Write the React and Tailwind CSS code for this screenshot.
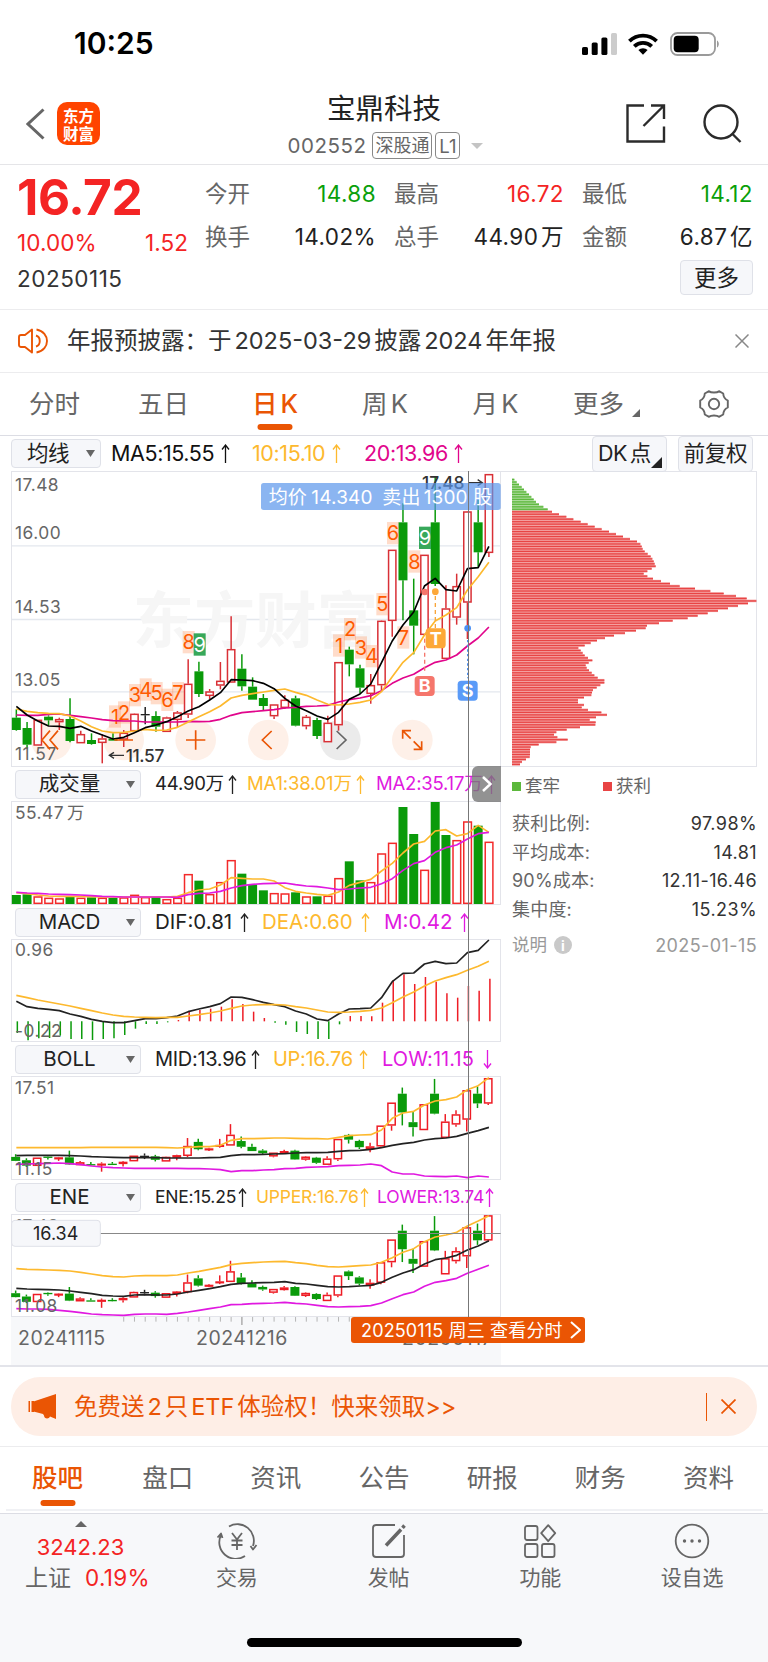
import React from "react";

const UP = "#ee1c25";
const DOWN = "#0a9a0a";
const ORANGE = "#ea5504";
const YELLOW = "#fdb92e";
const PINK = "#e1058c";
const PURPLE = "#e019e0";

// kind, high, body top, body bottom, low (chart units, 3 per pixel)
const candles = [
  ["g", 748, 773, 810, 812],
  ["g", 786, 804, 854, 866],
  ["r", 779, 779, 857, 857],
  ["g", 766, 770, 781, 796],
  ["r", 773, 777, 787, 810],
  ["g", 715, 777, 843, 847],
  ["r", 812, 822, 850, 850],
  ["g", 820, 840, 852, 854],
  ["r", 823, 835, 849, 910],
  ["g", 820, 836, 842, 842],
  ["r", 810, 818, 839, 861],
  ["r", 760, 761, 814, 814],
  ["k", 741, 762, 766, 793],
  ["g", 754, 768, 800, 815],
  ["r", 770, 772, 816, 816],
  ["r", 753, 757, 780, 803],
  ["r", 598, 671, 764, 774],
  ["g", 605, 634, 702, 711],
  ["r", 687, 694, 708, 718],
  ["r", 606, 662, 677, 688],
  ["r", 469, 567, 668, 668],
  ["g", 583, 626, 679, 692],
  ["g", 652, 680, 719, 719],
  ["g", 702, 714, 738, 750],
  ["r", 733, 733, 769, 777],
  ["r", 706, 719, 744, 747],
  ["g", 707, 715, 797, 799],
  ["r", 765, 770, 799, 808],
  ["g", 773, 780, 828, 837],
  ["r", 767, 788, 847, 847],
  ["r", 606, 606, 796, 812],
  ["g", 560, 569, 613, 649],
  ["g", 614, 625, 683, 700],
  ["r", 642, 675, 702, 731],
  ["r", 481, 482, 676, 690],
  ["r", 269, 269, 483, 530],
  ["g", 130, 187, 361, 481],
  ["g", 356, 451, 497, 583],
  ["r", 284, 284, 525, 525],
  ["g", 50, 187, 372, 378],
  ["r", 376, 445, 597, 597],
  ["r", 341, 378, 473, 494],
  ["r", 153, 154, 428, 537],
  ["g", 120, 187, 277, 320],
  ["r", 42, 42, 279, 291],
];

const ma5 = [739, 765, 783, 798, 799, 805, 799, 813, 825, 837, 832, 818, 803, 795, 785, 770, 753, 740, 720, 698, 659, 660, 662, 670, 686, 715, 738, 752, 768, 778, 757, 718, 702, 672, 608, 543, 495, 456, 378, 355, 389, 393, 326, 323, 259];
const ma10 = [747, 754, 758, 760, 761, 768, 783, 800, 813, 818, 817, 813, 808, 811, 810, 802, 786, 770, 755, 738, 714, 706, 701, 696, 691, 687, 697, 706, 720, 733, 735, 732, 727, 720, 695, 650, 607, 578, 525, 483, 465, 443, 390, 350, 307];
const ma20 = [765, 766, 766, 763, 762, 766, 770, 774, 779, 782, 783, 783, 786, 786, 786, 786, 784, 785, 784, 778, 766, 758, 755, 752, 749, 744, 742, 739, 738, 736, 726, 719, 714, 707, 692, 670, 654, 643, 623, 607, 600, 585, 558, 534, 501];

const volumes = [390, 388, 394, 398, 400, 396, 398, 397, 398, 399, 397, 389, 396, 396, 402, 398, 327, 347, 387, 351, 285, 326, 358, 376, 384, 385, 382, 394, 394, 392, 339, 289, 346, 351, 265, 233, 126, 207, 314, 111, 210, 225, 169, 182, 230];
const volumeKinds = "ggrrrgrgrgrrrgrrrgrrrgggrrgrgrrggrrrggrggrrgr";
const vol1 = [383, 386, 390, 393, 394, 394, 394, 395, 396, 396, 396, 396, 396, 396, 396, 394, 383, 375, 372, 360, 338, 340, 342, 342, 348, 368, 379, 384, 388, 391, 381, 361, 352, 343, 318, 295, 264, 237, 229, 198, 194, 213, 206, 181, 202];
const vol2 = [382, 384, 385, 387, 388, 389, 390, 392, 394, 395, 396, 396, 396, 396, 396, 397, 389, 385, 384, 379, 369, 362, 358, 356, 355, 354, 359, 363, 365, 369, 374, 372, 369, 367, 356, 341, 316, 296, 287, 262, 248, 240, 222, 206, 202];

const macd = [804, 826, 820, 819, 812, 822, 822, 825, 822, 820, 810, 791, 777, 777, 772, 765, 740, 735, 731, 725, 703, 717, 740, 759, 773, 779, 801, 807, 822, 822, 778, 753, 753, 754, 713, 645, 628, 657, 636, 650, 685, 698, 663, 677, 641];
const dif = [709, 725, 730, 733, 737, 747, 754, 763, 769, 773, 773, 767, 761, 761, 758, 753, 740, 732, 725, 716, 696, 697, 704, 712, 719, 725, 738, 747, 762, 767, 747, 732, 731, 729, 698, 650, 625, 624, 597, 589, 596, 594, 563, 556, 525];
const dea = [691, 698, 705, 711, 717, 723, 730, 737, 744, 750, 754, 756, 757, 758, 757, 757, 753, 749, 744, 738, 730, 723, 720, 719, 719, 720, 725, 729, 735, 741, 742, 741, 739, 736, 729, 713, 696, 681, 663, 648, 638, 629, 616, 604, 589];

const bollUp = [233, 233, 233, 233, 233, 233, 233, 232, 232, 232, 232, 232, 232, 232, 233, 234, 232, 230, 230, 226, 211, 206, 206, 205, 204, 204, 205, 206, 206, 207, 202, 197, 195, 194, 180, 145, 129, 124, 105, 93, 89, 81, 59, 47, 23];
const bollMid = [257, 256, 256, 256, 256, 257, 258, 260, 261, 262, 263, 263, 263, 263, 264, 264, 264, 264, 263, 262, 257, 254, 254, 253, 252, 251, 249, 248, 248, 247, 244, 242, 241, 238, 233, 226, 221, 217, 210, 206, 204, 199, 190, 182, 172];
const bollLow = [283, 282, 281, 280, 279, 281, 284, 288, 291, 293, 294, 295, 295, 295, 295, 295, 296, 296, 297, 299, 305, 302, 302, 300, 299, 296, 295, 292, 291, 290, 287, 286, 285, 282, 287, 306, 312, 312, 318, 319, 320, 318, 323, 318, 321];

const eneUp = [596, 598, 599, 600, 601, 603, 607, 612, 617, 620, 621, 618, 617, 617, 617, 615, 609, 604, 598, 592, 584, 580, 578, 576, 575, 574, 578, 581, 586, 590, 591, 589, 587, 585, 577, 563, 547, 536, 515, 501, 495, 487, 468, 453, 437];
const eneMid = [655, 657, 658, 659, 660, 663, 667, 671, 676, 678, 679, 675, 674, 675, 675, 672, 666, 661, 656, 650, 643, 640, 639, 638, 637, 635, 640, 642, 646, 650, 651, 650, 648, 646, 637, 622, 609, 599, 582, 569, 564, 556, 540, 528, 512];
const eneLow = [716, 717, 717, 718, 721, 724, 728, 732, 734, 735, 736, 733, 732, 732, 733, 730, 726, 721, 716, 711, 704, 703, 701, 700, 699, 697, 700, 702, 706, 710, 711, 710, 709, 707, 699, 686, 674, 666, 649, 637, 632, 625, 610, 598, 586];

const chips = [
  43, 50, 57, 65, 72, 79, 87, 94, 101, 108, 117, 130, 143, 156, 177, 199, 220, 242, 263, 284, 305, 327, 348, 369, 390, 411, 421, 425, 428, 434, 443, 452, 457, 461, 464, 467, 455, 442, 431, 442, 459, 483, 510, 539, 585, 631, 671, 708, 740, 769,
  744, 714, 684, 654, 623, 593, 563, 518, 477, 441, 437, 408, 375, 342, 315, 291, 272, 254, 235, 242, 248, 254, 264, 277, 266, 257, 260, 267, 275, 283, 293, 313, 313, 301, 290, 279, 276, 274, 252, 234, 234, 252, 245, 264, 304, 321, 288, 269, 287, 286,
  240, 200, 169, 162, 172, 203, 169, 116, 92, 90, 90, 90, 89, 78, 66, 60,
];

// digit, center x, baseline
const turns = [
  ["1", 345, 791], ["2", 372, 779], ["3", 405, 727], ["4", 437, 710], ["5", 470, 721], ["6", 502, 741], ["7", 534, 721], ["8", 566, 568], ["9", 599, 575],
  ["1", 1017, 578], ["2", 1050, 529], ["3", 1083, 584], ["4", 1115, 610], ["5", 1147, 454], ["6", 1179, 241], ["7", 1210, 554], ["8", 1243, 326], ["9", 1275, 255],
];

const cx = (i) => 49 + i * 32.22;
const price = (t) => 17.48 - (t - 36.6) / 149.1;
const line = (ys) => ys.map((y, i) => `${cx(i).toFixed(1)},${y}`).join(" ");

function Line({ ys, color, w = 5 }) {
  return <polyline points={line(ys)} fill="none" stroke={color} strokeWidth={w} strokeLinejoin="round" />;
}

function Candles({ y = (t) => t, dx = 0, red = UP, sw = 4.5 }) {
  return candles.map(([kind, h, t, b, l], i) => {
    const x = cx(i) + dx;
    const top = y(t);
    const bottom = Math.max(y(b), top + 4);
    const color = kind === "g" ? DOWN : kind === "r" ? red : "#222";
    return (
      <g key={i} stroke={color} strokeWidth={sw}>
        <line x1={x} x2={x} y1={y(h)} y2={top} />
        <line x1={x} x2={x} y1={bottom} y2={y(l)} />
        {kind === "r" ? (
          <rect x={x - 11} y={top + 2} width={22} height={Math.max(bottom - top - 4, 2)} fill="#fff" />
        ) : (
          <rect x={x - 13.5} y={top} width={27} height={bottom - top} fill={color} stroke="none" />
        )}
      </g>
    );
  });
}

function Panel({ top, height, children }) {
  return (
    <svg className="block w-[490px]" viewBox={`33 ${top} 1470 ${height}`} fontFamily="Inter, 'Noto Sans CJK SC', sans-serif">
      <rect x="34.5" y={top + 1.5} width="1467" height={height - 3} fill="#fff" stroke="#e3e4ea" strokeWidth="3" />
      {children}
    </svg>
  );
}

function Label({ y, x = 45, children }) {
  return (
    <text x={x} y={y} fontSize="52" letterSpacing="1.5" fill="#666">
      {children}
    </text>
  );
}

function Arrow({ down }) {
  return (
    <svg className={`h-[19px] w-[9px] shrink-0 ${down ? "rotate-180" : ""}`} viewBox="0 0 9 19" fill="none" stroke="currentColor" strokeWidth="1.3">
      <path d="M4.5 19V1M1 5.5 4.5 1 8 5.5" />
    </svg>
  );
}

function Reading({ className, down, children }) {
  return (
    <span className={`flex shrink-0 items-center whitespace-nowrap ${className}`}>
      {children}
      <Arrow down={down} />
    </span>
  );
}

function IndicatorRow({ name, className, children }) {
  return (
    <div className="flex h-[34px] items-center pl-1">
      <div className="flex h-[29px] w-[126px] shrink-0 items-center rounded-[4px] border border-[#dfe1e8] bg-[#f6f7fa] text-[20.5px] text-[#222]">
        <span className="w-[107px] text-center">{name}</span>
        <span className="ml-[3px] text-[#666]">
          <Triangle />
        </span>
      </div>
      <div className={`flex items-center pl-[14px] ${className}`}>{children}</div>
    </div>
  );
}

function Triangle({ up }) {
  return (
    <svg className={`h-[7px] w-[9px] ${up ? "rotate-180" : ""}`} viewBox="0 0 9 7" fill="currentColor">
      <path d="M0 0h9L4.5 7z" />
    </svg>
  );
}

function StatusBar() {
  return (
    <div className="flex h-[78px] items-center pt-[9px] pl-[74px]">
      <span className="w-[508px] text-[30px] font-semibold text-black">10:25</span>
      <svg className="h-[22px] w-[36px]" viewBox="0 0 36 22">
        <rect x="0" y="14" width="6" height="8" rx="1.6" />
        <rect x="9.7" y="9.5" width="6" height="12.5" rx="1.6" />
        <rect x="19.4" y="4.5" width="6" height="17.5" rx="1.6" />
        <rect x="29" y="0" width="6" height="22" rx="1.6" fill="#ccc" />
      </svg>
      <svg className="ml-[10px] h-[22px] w-[30px]" viewBox="0 0 30 22" fill="none" stroke="#000" strokeWidth="3.8">
        <path d="M1.4 8.2a19.5 19.5 0 0 1 27.2 0" />
        <path d="M6.3 13.3a12.5 12.5 0 0 1 17.4 0" />
        <path d="M15 21.8 10.4 17a6.6 6.6 0 0 1 9.2 0z" fill="#000" stroke="none" />
      </svg>
      <svg className="ml-[12px] h-[24px] w-[50px]" viewBox="0 0 50 24">
        <rect x="1" y="1" width="44" height="22" rx="6.5" fill="none" stroke="#9a9a9a" strokeWidth="1.8" />
        <rect x="3.7" y="3.7" width="25" height="16.6" rx="4" />
        <path d="M47 8.5c2.4 1.2 2.4 5.8 0 7z" fill="#9a9a9a" />
      </svg>
    </div>
  );
}

function Header() {
  return (
    <div className="flex h-[87px] items-center justify-between border-b border-[#e5e5e8] pr-[26px] pl-[26px]">
      <div className="flex w-[116px] items-center gap-[12px] pt-[5px]">
        <svg className="h-[32px] w-[19px]" viewBox="0 0 19 32" fill="none" stroke="#666" strokeWidth="3">
          <path d="M17.5 1.5 2 16l15.5 14.5" />
        </svg>
        <div className="flex h-[43px] w-[43px] flex-col items-center justify-center rounded-[10px] bg-[#ff4400] font-['Noto_Sans_CJK_SC'] text-[15.5px] leading-[18px] font-bold text-white">
          <span>东方</span>
          <span>财富</span>
        </div>
      </div>
      <div className="flex flex-col items-center pt-[8px]">
        <div className="text-[28.5px] leading-[36px] text-[#222]">宝鼎科技</div>
        <div className="flex items-center gap-[3px] pt-[5px] pl-[3px] text-[20.5px] leading-[28px] text-[#666]">
          <span className="mr-[3px] tracking-[0.5px]">002552</span>
          <span className="flex h-[27px] w-[60px] items-center justify-center rounded-[4px] border-[1.5px] border-[#888] text-[18px]">深股通</span>
          <span className="flex h-[27px] w-[25px] items-center justify-center rounded-[4px] border-[1.5px] border-[#888] text-[18.5px]">L1</span>
          <svg className="ml-[8px] h-[6px] w-[12px]" viewBox="0 0 12 6" fill="#c4c4c4">
            <path d="M0 0h12L6 6z" />
          </svg>
        </div>
      </div>
      <div className="flex w-[116px] items-center gap-[37px] pt-[4px]">
        <svg className="h-[39px] w-[40px]" viewBox="0 0 40 39" fill="none" stroke="#2b2b2b" strokeWidth="2.4">
          <path d="M18 1.5H1.5v36H38V22.5M25 1.5h13V15M38 1.5 17.5 22" />
        </svg>
        <svg className="h-[39px] w-[39px]" viewBox="0 0 39 39" fill="none" stroke="#2b2b2b" strokeWidth="2.4">
          <circle cx="18" cy="18" r="16.5" />
          <path d="m29.5 30 8 8" />
        </svg>
      </div>
    </div>
  );
}

function Stat({ label, value, color }) {
  return (
    <div className="flex h-[43px] items-center justify-between">
      <span className="text-[22.5px] text-[#666]">{label}</span>
      <span className={`text-[22.5px] tracking-[0.4px] [text-autospace:normal] ${color}`}>{value}</span>
    </div>
  );
}

function Quote() {
  return (
    <div className="flex h-[145px] justify-between border-b border-[#ececee] pr-[15px] pl-[17px]">
      <div className="w-[171px]">
        <div className="mt-[8px] text-[49.5px] leading-[48px] font-bold tracking-[-0.4px] text-[#f42424]">16.72</div>
        <div className="mt-[7px] flex justify-between text-[22.5px] leading-[30px] tracking-[0.1px] text-[#f42424]">
          <span>10.00%</span>
          <span>1.52</span>
        </div>
        <div className="mt-[6px] text-[22.5px] leading-[30px] tracking-[0.5px] text-[#333]">20250115</div>
      </div>
      <div className="w-[548px] pt-[7px]">
        <div className="grid grid-cols-[171px_170px_171px] gap-x-[18px]">
          <Stat label="今开" value="14.88" color="text-[#0a9f0a]" />
          <Stat label="最高" value="16.72" color="text-[#f42424]" />
          <Stat label="最低" value="14.12" color="text-[#0a9f0a]" />
          <Stat label="换手" value="14.02%" color="text-[#222]" />
          <Stat label="总手" value="44.90万" color="text-[#222]" />
          <Stat label="金额" value="6.87亿" color="text-[#222]" />
        </div>
        <div className="mt-[2px] ml-auto flex h-[35px] w-[73px] items-center justify-center rounded-[4px] border border-[#dfe1e8] bg-[#f6f7fa] text-[22.5px] text-[#222]">更多</div>
      </div>
    </div>
  );
}

function Notice() {
  return (
    <div className="flex h-[63px] items-center border-b border-[#ececee] pr-[19px] pl-[18px]">
      <svg className="h-[26px] w-[31px]" viewBox="0 0 31 26" fill="none" stroke={ORANGE} strokeWidth="1.9">
        <path d="M14 1.5v23L7 19H3a2 2 0 0 1-2-2V9a2 2 0 0 1 2-2h4zM18 7.5c5 1.500 5 9.5 0 11M18.5 1.5c14 2.5 14 20.5 0 23" strokeLinejoin="round" />
      </svg>
      <span className="ml-[18px] text-[23.5px] text-[#333] [text-autospace:normal]">年报预披露：于2025-03-29披露2024年年报</span>
      <svg className="ml-auto h-[14px] w-[14px]" viewBox="0 0 14 14" stroke="#888" strokeWidth="1.5">
        <path d="m.5.5 13 13M13.500.5l-13 13" />
      </svg>
    </div>
  );
}

function PeriodTabs() {
  const tabs = [
    ["分时", "w-[109px]"],
    ["五日", "w-[109px]"],
    ["日K", "w-[114px]"],
    ["周K", "w-[106px]"],
    ["月K", "w-[115px]"],
  ];
  return (
    <div className="flex h-[63px] items-center border-b border-[#dcdde4] text-[25.5px] text-[#666]">
      {tabs.map(([name, width]) => (
        <div key={name} className={`relative shrink-0 text-center [text-autospace:normal] ${width} ${name === "日K" ? "font-medium text-[#ea5504]" : ""}`}>
          {name}
          {name === "日K" && <div className="absolute -bottom-[7px] left-1/2 h-[6px] w-[35px] -translate-x-1/2 rounded-[3px] bg-[#ea5504]" />}
        </div>
      ))}
      <div className="ml-[20px] flex items-end gap-[8px]">
        更多
        <svg className="mb-[6px] h-[8px] w-[8px]" viewBox="0 0 8 8" fill="#666">
          <path d="M8 0v8H0z" />
        </svg>
      </div>
      <svg className="ml-[59px] h-[28px] w-[30px]" viewBox="0 0 30 28" fill="none" stroke="#666" strokeWidth="1.9" strokeLinejoin="round">
        <path d="M10 1.2c2 1.800 8 1.800 10 0l4.200 2.300c.2 3.600 1.600 5.600 4.600 7v7c-3 1.400-4.400 3.400-4.600 7L20 26.800c-2-1.800-8-1.800-10 0l-4.200-2.300c-.2-3.600-1.600-5.600-4.600-7v-7c3-1.400 4.400-3.400 4.600-7z" />
        <circle cx="15" cy="14" r="5.2" />
      </svg>
    </div>
  );
}

function MovingAverageRow() {
  return (
    <div className="flex h-[35px] items-center pr-[15px] pl-[11px] text-[21.5px] tracking-[-0.4px]">
      <div className="flex h-[29px] w-[90px] shrink-0 items-center gap-[17px] rounded-[4px] border border-[#dfe1e8] bg-[#f6f7fa] pl-[15px] text-[21.5px] text-[#222]">
        均线
        <span className="text-[#666]">
          <Triangle />
        </span>
      </div>
      <Reading className="ml-[10px] w-[141px] gap-[7px] text-[#111]">MA5:15.55</Reading>
      <Reading className="w-[112px] gap-[7px] text-[#fdb92e]">10:15.10</Reading>
      <Reading className="gap-[6px] text-[#e1058c]">20:13.96</Reading>
      <div className="relative ml-auto flex h-[36px] w-[75px] items-center rounded-[4px] border border-[#dfe1e8] bg-[#f6f7fa] pl-[5px] text-[#222] [text-autospace:normal]">
        DK点
        <svg className="absolute right-[4px] bottom-[3px] h-[11px] w-[11px]" viewBox="0 0 11 11" fill="#222">
          <path d="M11 0v11H0z" />
        </svg>
      </div>
      <div className="ml-[11px] flex h-[36px] w-[75px] items-center justify-center rounded-[4px] border border-[#dfe1e8] bg-[#f6f7fa] text-[21.5px] text-[#222]">前复权</div>
    </div>
  );
}

function TradeMark({ x, y, color, children }) {
  return (
    <>
      <rect x={x - 30} y={y - 30} width="60" height="60" rx="11" fill={color} />
      <text x={x} y={y + 19} textAnchor="middle" fontSize="54" fontWeight="700" fill="#fff">
        {children}
      </text>
    </>
  );
}

function MainChart() {
  return (
    <Panel top={33} height={888}>
      <g stroke="#e4e8ee" strokeWidth="4">
        <path d="M36 257.5H1500M36 478.5H1500M36 695.5H1500" />
      </g>
      <text x="398" y="549" fontSize="184" fontWeight="700" fill="#f6f6f6">东方财富</text>
      {[154, 371, 587, 805, 1021, 1237].map((x) => (
        <circle key={x} cx={x} cy="840" r="61" fill={x === 1021 ? "#ebebeb" : "#fef0e8"} />
      ))}
      <Candles red="#d93036" />
      {turns.map(([n, x, y]) => (
        <g key={x} fontSize="60" textAnchor="middle">
          <rect x={x - 18} y={y - 55} width="36" height="67" fill={n === "9" ? "#37a85a" : "#ff8a50"} fillOpacity={n === "9" ? 1 : 0.3} />
          <text x={x} y={y} fill={n === "9" ? "#fff" : "#ff5a00"}>{n}</text>
        </g>
      ))}
      <Label y={94}>17.48</Label>
      <Label y={237}>16.00</Label>
      <Label y={459}>14.53</Label>
      <Label y={679}>13.05</Label>
      <Label y={900}>11.57</Label>
      <Line ys={ma20} color={PINK} />
      <Line ys={ma10} color={YELLOW} />
      <Line ys={ma5} color="#000" />
      <g fill="none" stroke={ORANGE} strokeWidth="5">
        <path d="M150 812 126 840l24 28M174 812l-24 28 24 28M343 840h56M558 840h58M587 811v58M815 813l-28 27 28 27" />
        <path d="M1208 836v-24h25M1208 812l24 24M1241 868h24v-24M1265 868l-24-24" />
        <path d="m1010 813 28 27-28 27" stroke="#666" />
      </g>
      <g stroke="#333" strokeWidth="4" fill="none">
        <path d="M372 886h-44m14-9-14 9 14 9" />
        <path d="M1405 68h42m-14-9 14 9-14 9" />
      </g>
      <text x="377" y="906" fontSize="52" fontWeight="500" letterSpacing="-1" fill="#333">11.57</text>
      <text x="1266" y="87" fontSize="52" fontWeight="500" fill="#333">17.48</text>
      <g strokeWidth="4" fill="none">
        <path d="M1274 536V640" stroke="#f5766c" strokeDasharray="12 9" />
        <path d="M1306 408V505" stroke="#f9a63a" strokeDasharray="12 9" />
        <path d="M1403 540V655" stroke="#4a90f5" strokeDasharray="7 7" />
      </g>
      <circle cx="1274" cy="396" r="10" fill="#f5766c" />
      <circle cx="1306" cy="395" r="10" fill="#fda838" />
      <circle cx="1403" cy="505" r="10" fill="#4a90f5" />
      <TradeMark x={1274} y={678} color="#f5766c">B</TradeMark>
      <TradeMark x={1307} y={535} color="#fda838">T</TradeMark>
      <TradeMark x={1403} y={692} color="#5a9bf8">S</TradeMark>
      <rect x="783" y="69" width="719" height="81" rx="8" fill="#5a96eb" fillOpacity="0.7" />
      <text y="131" fontSize="57" letterSpacing="0.5" fill="#fff">
        <tspan x="806">均价</tspan>
        <tspan x="934">14.340</tspan>
        <tspan x="1147">卖出</tspan>
        <tspan x="1271">1300</tspan>
        <tspan x="1419">股</tspan>
      </text>
    </Panel>
  );
}

function VolumeChart() {
  return (
    <Panel top={108} height={312}>
      {volumes.map((y, i) =>
        volumeKinds[i] === "g" ? (
          <rect key={i} x={cx(i) - 13.5} y={y} width="27" height={417 - y} fill={DOWN} />
        ) : (
          <rect key={i} x={cx(i) - 11} y={y + 2} width="23" height={413 - y} fill="#fff" stroke="#f32a2a" strokeWidth="4.5" />
        )
      )}
      <Line ys={vol1} color={YELLOW} />
      <Line ys={vol2} color={PURPLE} />
      <Label y={163}>
        55.47<tspan dx="9">万</tspan>
      </Label>
    </Panel>
  );
}

function MacdChart() {
  return (
    <Panel top={522} height={309}>
      {macd.map((y, i) => (
        <line key={i} x1={cx(i) + 3} x2={cx(i) + 3} y1="769" y2={y} stroke={y > 769 ? DOWN : UP} strokeWidth="4.5" />
      ))}
      <Line ys={dif} color="#222" />
      <Line ys={dea} color={YELLOW} />
      <Label y={573}>0.96</Label>
      <Label y={815}>-0.22</Label>
    </Panel>
  );
}

function BollChart() {
  return (
    <Panel top={18} height={312}>
      <Candles y={(t) => 21 + (17.51 - price(t)) * 48.24} dx={-2} />
      <Line ys={bollUp} color={YELLOW} />
      <Line ys={bollMid} color="#222" />
      <Line ys={bollLow} color={PURPLE} />
      <Label y={73}>17.51</Label>
      <Label y={314}>11.15</Label>
    </Panel>
  );
}

function EneChart() {
  return (
    <Panel top={432} height={309}>
      <Candles y={(t) => 434 + (17.48 - price(t)) * 47.7} dx={-2} />
      <Line ys={eneUp} color={YELLOW} />
      <Line ys={eneMid} color="#222" />
      <Line ys={eneLow} color={PURPLE} />
      <Label y={486}>17.48</Label>
      <Label y={725}>11.08</Label>
      <path d="M36 490.5H1502" stroke="#888" strokeWidth="3" />
      <rect x="35" y="451" width="266" height="78" rx="10" fill="#f6f7fa" stroke="#dfe1e8" strokeWidth="3" />
      <text x="167" y="510" fontSize="54" textAnchor="middle" fill="#222">16.34</text>
    </Panel>
  );
}

function DateAxis() {
  return (
    <div className="relative h-[48px] w-[490px] bg-[#f7f8fa]">
      <svg className="block h-[9px] w-[490px]" viewBox="33 741 1470 27" stroke="#b5b5b5" strokeWidth="3">
        {candles.map((_, i) => i >= 10 && <line key={i} x1={cx(i)} x2={cx(i)} y1="741" y2={i === 21 ? 765 : 755} strokeWidth={i === 21 ? 5 : 3} />)}
      </svg>
      <div className="flex text-[19.5px] leading-[24px] tracking-[0.5px] text-[#666]">
        <span className="w-[178px] pl-[7px]">20241115</span>
        <span className="w-[206px] pl-[7px]">20241216</span>
        <span className="pl-[7px]">20250117</span>
      </div>
      <div className="absolute top-0 left-[340px] flex h-[26px] w-[234px] items-center justify-between rounded-[3px] bg-[#ea5504] pr-[4px] pl-[10px] text-[18px] whitespace-nowrap text-white">
        <span className="tracking-[0.15px]">20250115 周三 查看分时</span>
        <svg className="h-[18px] w-[11px]" viewBox="0 0 11 18" fill="none" stroke="#fff" strokeWidth="2">
          <path d="m1 1 9 8-9 8" />
        </svg>
      </div>
    </div>
  );
}

function Charts() {
  return (
    <div className="relative w-[490px]">
      <MainChart />
      <IndicatorRow name="成交量" className="text-[18.5px] tracking-[-0.2px]">
        <Reading className="w-[92px] gap-[4px] text-[#222]">44.90万</Reading>
        <Reading className="w-[129px] gap-[4px] text-[#fdb92e]">MA1:38.01万</Reading>
        <Reading className="gap-[4px] text-[#e019e0]">MA2:35.17万</Reading>
      </IndicatorRow>
      <VolumeChart />
      <IndicatorRow name="MACD" className="text-[20.5px]">
        <Reading className="w-[107px] gap-[8px] text-[#222]">DIF:0.81</Reading>
        <Reading className="w-[122px] gap-[8px] text-[#fdb92e]">DEA:0.60</Reading>
        <Reading className="gap-[7px] text-[#e019e0]">M:0.42</Reading>
      </IndicatorRow>
      <MacdChart />
      <IndicatorRow name="BOLL" className="text-[20px] tracking-[-0.3px]">
        <Reading className="w-[118px] gap-[5px] text-[#222]">MID:13.96</Reading>
        <Reading className="w-[109px] gap-[6px] text-[#fdb92e]">UP:16.76</Reading>
        <Reading className="gap-[9px] tracking-[0.1px] text-[#e019e0]" down>LOW:11.15</Reading>
      </IndicatorRow>
      <BollChart />
      <IndicatorRow name="ENE" className="text-[17.5px] tracking-[-0.2px]">
        <Reading className="w-[101px] gap-[2px] text-[#222]">ENE:15.25</Reading>
        <Reading className="w-[121px] gap-px text-[#fdb92e]">UPPER:16.76</Reading>
        <Reading className="gap-px text-[#e019e0]">LOWER:13.74</Reading>
      </IndicatorRow>
      <EneChart />
      <DateAxis />
      <div className="absolute top-0 left-[457px] h-[846px] w-px bg-[#777]" />
      <div className="absolute top-[295px] right-0 flex h-[36px] w-[29px] items-center justify-center rounded-l-[6px] bg-[#777]/80">
        <svg className="h-[16px] w-[10px]" viewBox="0 0 10 16" fill="none" stroke="#fff" strokeWidth="2.5">
          <path d="m1 1 7.500 7L1 15" />
        </svg>
      </div>
    </div>
  );
}

function ChipPanel() {
  const rows = [
    ["获利比例:", "97.98%"],
    ["平均成本:", "14.81"],
    ["90%成本:", "12.11-16.46"],
    ["集中度:", "15.23%"],
  ];
  return (
    <div className="w-[256px] text-[18px]">
      <svg className="block w-[256px]" viewBox="3 33 768 888">
        <rect x="-10" y="34.5" width="779.5" height="885" fill="none" stroke="#e3e4ea" strokeWidth="3" />
        {chips.map((end, i) => (
          <g key={i} fill={i < 13 ? "#5cb83c" : "#e84444"}>
            <rect x="36" y={55 + i * 7.43} width={end - 36} height="7.43" fillOpacity="0.6" />
            <rect x="36" y={57 + i * 7.43} width={end - 36} height="3.5" />
          </g>
        ))}
      </svg>
      <div className="pl-[11px]">
        <div className="flex h-[38px] items-center text-[17.5px] text-[#666]">
          <span className="mr-[4px] h-[9px] w-[9px] bg-[#5cb83c]" />
          <span className="w-[78px]">套牢</span>
          <span className="mr-[4px] h-[9px] w-[9px] bg-[#e84444]" />
          获利
        </div>
        <div className="pt-[4px] tracking-[0.4px]">
          {rows.map(([label, value]) => (
            <div key={label} className="flex h-[28.7px] items-center justify-between">
              <span className="tracking-[0.2px] text-[#666] [text-autospace:normal]">{label}</span>
              <span className="text-[#333]">{value}</span>
            </div>
          ))}
        </div>
        <div className="flex h-[43px] items-center text-[17.5px] text-[#999]">
          说明
          <span className="ml-[7px] flex h-[18px] w-[18px] items-center justify-center rounded-full bg-[#c9c9c9] text-[14px] font-bold text-white">i</span>
          <span className="ml-auto text-[18px] tracking-[0.4px]">2025-01-15</span>
        </div>
      </div>
    </div>
  );
}

function Promo() {
  return (
    <div className="h-[82px] border-t-2 border-b border-t-[#e3e4ea] border-b-[#ececee] px-[11px] pt-[10px]">
      <div className="flex h-[59px] items-center rounded-[29px] bg-[#feeee6] pr-[10px] pl-[17px] text-[#ea5504]">
        <svg className="h-[25px] w-[28px]" viewBox="0 0 28 25" fill="currentColor">
          <path d="M28 0v25l-6-2.5c-1 3-6 2.5-6-1L15 20 5.5 17.5v-10zM.5 7h1.500v11H.5zM3.500 7H6v11H3.500z" />
        </svg>
        <span className="ml-[18px] text-[23.5px] [text-autospace:normal]">免费送2只ETF体验权！快来领取&gt;&gt;</span>
        <span className="ml-auto h-[28px] w-[1.5px] bg-[#ea5504]" />
        <svg className="mr-[11px] ml-[14px] h-[15px] w-[15px]" viewBox="0 0 15 15" stroke="currentColor" strokeWidth="1.7">
          <path d="m.5.5 14 14M14.500.5l-14 14" />
        </svg>
      </div>
    </div>
  );
}

function InfoTabs() {
  return (
    <div className="flex h-[67px] justify-center border-b border-[#dcdde4]">
      <div className="grid h-[64px] w-[757px] grid-cols-7 items-center border-b-2 border-[#f0f1f4] text-center text-[25.5px] text-[#666]">
        {["股吧", "盘口", "资讯", "公告", "研报", "财务", "资料"].map((name, i) => (
          <div key={name} className={i === 0 ? "relative -ml-[4px] font-medium text-[#ea5504]" : ""}>
            {name}
            {i === 0 && <div className="absolute -bottom-[9px] left-1/2 h-[6px] w-[35px] -translate-x-1/2 rounded-[3px] bg-[#ea5504]" />}
          </div>
        ))}
      </div>
    </div>
  );
}

function Action({ label, children }) {
  return (
    <div className="flex flex-1 flex-col items-center pt-[9px] text-[21px] leading-[30px] text-[#666]">
      <svg className="mb-[4px] h-[36px] w-[42px]" viewBox="0 0 42 36" fill="none" stroke="#666" strokeWidth="1.8" strokeLinejoin="round">
        {children}
      </svg>
      {label}
    </div>
  );
}

function BottomBar() {
  return (
    <div className="h-[148px] bg-[#f7f8fa]">
      <div className="flex h-[124px]">
        <div className="flex w-[161px] flex-col items-center pt-[7px] text-[#f42424]">
          <span className="text-[#666]">
            <svg className="h-[6px] w-[12px]" viewBox="0 0 12 6" fill="currentColor">
              <path d="M6 0l6 6H0z" />
            </svg>
          </span>
          <span className="mt-[5px] text-[22px] leading-[30px]">3242.23</span>
          <div className="flex w-full items-center gap-[14px] pl-[25px] text-[22.5px] leading-[32px]">
            <span className="text-[23px] text-[#666]">上证</span>
            <span className="tracking-[0.3px]">0.19%</span>
          </div>
        </div>
        <Action label="交易">
          <path d="M13 3.5A16.5 16.5 0 0 1 37 23M29 33A16.5 16.5 0 0 1 5 12M1.5 14.5 5 10.5l1.500 4.5M40.5 22 37 26.5 34.5 23" />
          <path d="m16 10 5 6.500 5-6.500M21 16.5V27M15.5 17.5h11M15.5 22h11" />
        </Action>
        <Action label="发帖">
          <path d="M27 2H8a3 3 0 0 0-3 3v26a3 3 0 0 0 3 3h25a3 3 0 0 0 3-3V12" />
          <path d="M18 22.5 33 6.500M34.500 4.800 36.500 2.500" strokeWidth="3.5" />
        </Action>
        <Action label="功能">
          <rect x="6" y="3" width="12.5" height="14" rx="2" />
          <rect x="6" y="21" width="12.5" height="13" rx="2" />
          <rect x="23" y="21" width="12.5" height="13" rx="2" />
          <path d="m29.2 2.200 7 8-7 8-7-8z" />
        </Action>
        <Action label="设自选">
          <circle cx="21" cy="18" r="16.3" />
          <g fill="#666" stroke="none">
            <circle cx="13.5" cy="18" r="1.7" />
            <circle cx="21" cy="18" r="1.7" />
            <circle cx="28.5" cy="18" r="1.7" />
          </g>
        </Action>
      </div>
      <div className="mx-auto h-[9px] w-[275px] rounded-full bg-black" />
    </div>
  );
}

export default function App() {
  return (
    <div className="h-[1662px] w-[768px] overflow-hidden bg-white font-[Inter,'Noto_Sans_CJK_SC',sans-serif]">
      <StatusBar />
      <Header />
      <Quote />
      <Notice />
      <PeriodTabs />
      <MovingAverageRow />
      <div className="flex pl-[11px]">
        <Charts />
        <ChipPanel />
      </div>
      <Promo />
      <InfoTabs />
      <BottomBar />
    </div>
  );
}
